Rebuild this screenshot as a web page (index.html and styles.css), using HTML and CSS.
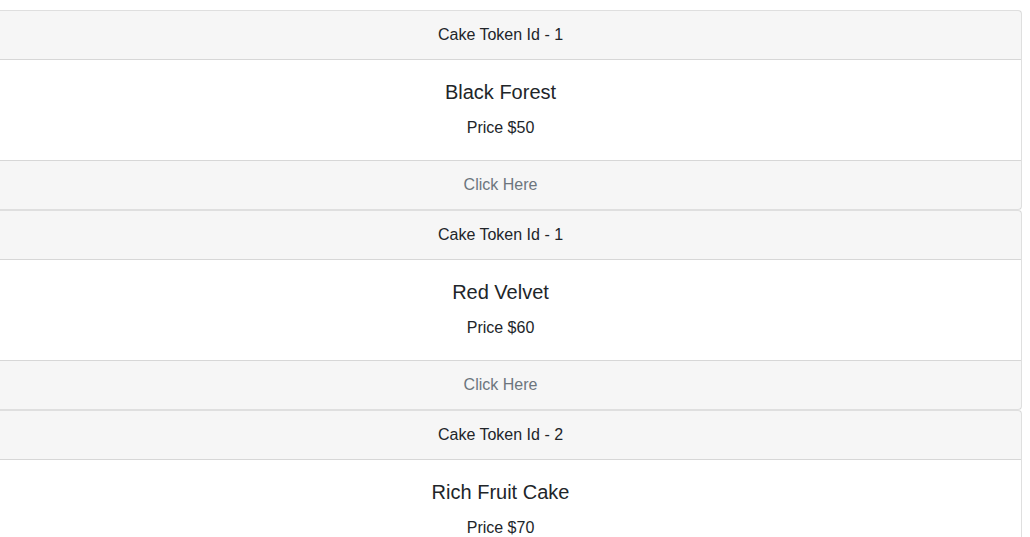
FILE: index.html
```html
<!DOCTYPE html>
<html>
<head>
<meta charset="utf-8">
<link rel="stylesheet" href="styles.css">
</head>
<body>
<div class="list">
  <div class="card">
    <div class="card-header">Cake Token Id - 1</div>
    <div class="card-body">
      <h5 class="card-title">Black Forest</h5>
      <p class="card-text">Price $50</p>
    </div>
    <div class="card-footer">Click Here</div>
  </div>
  <div class="card">
    <div class="card-header">Cake Token Id - 1</div>
    <div class="card-body">
      <h5 class="card-title">Red Velvet</h5>
      <p class="card-text">Price $60</p>
    </div>
    <div class="card-footer">Click Here</div>
  </div>
  <div class="card">
    <div class="card-header">Cake Token Id - 2</div>
    <div class="card-body">
      <h5 class="card-title">Rich Fruit Cake</h5>
      <p class="card-text">Price $70</p>
    </div>
    <div class="card-footer">Click Here</div>
  </div>
</div>
</body>
</html>
```
FILE: styles.css
```css
html, body {
  margin: 0;
  padding: 0;
  overflow: hidden;
  background: #fff;
}
body {
  font-family: "Liberation Sans", Arial, sans-serif;
  font-size: 16px;
  line-height: 24px;
  color: #212529;
}
.list {
  display: flex;
  flex-direction: column;
  padding-top: 10px;
  margin-left: -21px;
  width: 1043px;
}
.card {
  display: flex;
  flex-direction: column;
  border: 1px solid rgba(0,0,0,.125);
  border-radius: 4px;
  text-align: center;
  background: #fff;
}
.card-header {
  padding: 12px 20px;
  background: rgba(0,0,0,.035);
  border-bottom: 1px solid rgba(0,0,0,.125);
}
.card-body {
  padding: 20px;
}
.card-title {
  margin: 0 0 12px;
  font-size: 20px;
  font-weight: 400;
  line-height: 24px;
}
.card-text {
  margin: 0;
}
.card-footer {
  padding: 12px 20px;
  background: rgba(0,0,0,.035);
  border-top: 1px solid rgba(0,0,0,.125);
  color: #6c757d;
}
```
